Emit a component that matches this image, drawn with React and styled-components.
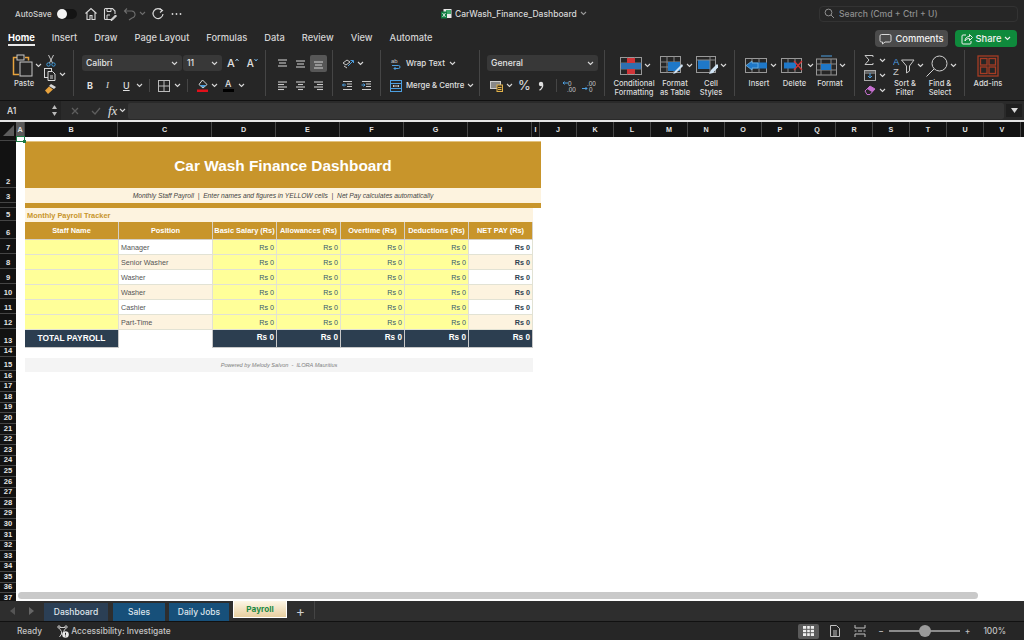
import React from "react";
import styled, { createGlobalStyle } from "styled-components";

const Global = createGlobalStyle`
  html, body { margin: 0; padding: 0; background: #252525; }
  * { box-sizing: border-box; }
`;

const UI = `"Inter", "Liberation Sans", sans-serif`;
const SHEET = `"Liberation Sans", Arial, sans-serif`;

const Window = styled.div`
  width: 1024px;
  height: 640px;
  overflow: hidden;
  display: flex;
  flex-direction: column;
  background: #262626;
  font-family: ${UI};
  color: #e4e4e4;
`;
const Gap = styled.span`
  width: ${(p) => p.$w}px;
  flex: none;
`;
const Glyph = styled.svg`
  flex: none;
  display: block;
`;

/* title bar */
const TitleBar = styled.div`
  height: 27px;
  flex: none;
  display: grid;
  grid-template-columns: 441px 378px 1fr;
  align-items: center;
`;
const QuickBar = styled.div`
  display: flex;
  align-items: center;
  padding-left: 15px;
`;
const AutoSave = styled.span`
  width: 35px;
  font-size: 8px;
  font-weight: 500;
  white-space: nowrap;
  color: #d0d0d0;
`;
const Toggle = styled.span`
  width: 20px;
  height: 10px;
  margin: 0 7px;
  border-radius: 5px;
  background: #141414;
  display: flex;
  &::before {
    content: "";
    width: 10px;
    height: 10px;
    border-radius: 50%;
    background: #f4f4f4;
  }
`;
const QuickIcon = styled.span`
  display: flex;
  margin-left: ${(p) => p.$ml || 0}px;
  opacity: ${(p) => (p.$dim ? 0.4 : 1)};
`;
const FileName = styled.div`
  display: flex;
  align-items: center;
  gap: 3px;
  font-size: 8.5px;
  font-weight: 500;
  color: #d8d8d8;
`;
const Search = styled.div`
  width: 199px;
  height: 16px;
  border: 1px solid #333;
  border-radius: 4px;
  display: flex;
  align-items: center;
  gap: 4px;
  padding-left: 4px;
  font-size: 8.6px;
  font-weight: 500;
  color: #8f8f8f;
`;

/* ribbon tabs */
const TabBar = styled.div`
  height: 23px;
  flex: none;
  display: flex;
  align-items: flex-start;
  padding: 4px 7px 0 8px;
  gap: 17px;
`;
const MenuTab = styled.div`
  height: 15px;
  font-size: 9.3px;
  line-height: 13px;
  white-space: nowrap;
  font-weight: ${(p) => (p.$active ? 700 : 500)};
  color: ${(p) => (p.$active ? "#fff" : "#d4d4d4")};
  border-bottom: ${(p) => (p.$active ? "2px solid #e8e8e8" : "none")};
`;
const TopActions = styled.div`
  margin: -1px 0 0 auto;
  display: flex;
  gap: 7px;
`;
const TopButton = styled.div`
  height: 17px;
  width: ${(p) => p.$w}px;
  border-radius: 4px;
  background: ${(p) => p.$bg};
  color: #f2f2f2;
  font-size: 9.3px;
  font-weight: 500;
  display: flex;
  align-items: center;
  justify-content: center;
  gap: 3px;
`;

/* ribbon */
const Ribbon = styled.div`
  height: 51px;
  flex: none;
  display: flex;
  border-bottom: 1px solid #111;
`;
const Group = styled.div`
  width: ${(p) => p.$w}px;
  height: 46px;
  padding: 5px 0 0 ${(p) => p.$pl || 0}px;
  border-right: ${(p) => (p.$last ? "none" : "1px solid #454545")};
  display: flex;
`;
const Stack = styled.div`
  display: flex;
  flex-direction: column;
  gap: ${(p) => p.$gap ?? 6.5}px;
  width: ${(p) => (p.$w ? `${p.$w}px` : "auto")};
  margin-top: ${(p) => p.$mt || 0}px;
`;
const Line = styled.div`
  height: ${(p) => p.$h || 16}px;
  display: flex;
  align-items: center;
  gap: ${(p) => p.$gap || 0}px;
  padding-left: ${(p) => p.$pl || 0}px;
`;
const Select = styled.div`
  width: ${(p) => p.$w}px;
  height: 16px;
  flex: none;
  border-radius: 3px;
  background: #383838;
  padding: 0 4px;
  display: flex;
  align-items: center;
  justify-content: space-between;
  font-size: 8.6px;
  font-weight: 500;
  color: #e4e4e4;
`;
const Big = styled.div`
  width: ${(p) => p.$w}px;
  flex: none;
  display: flex;
  flex-direction: column;
  align-items: center;
`;
const BigIcon = styled.div`
  height: 21px;
  flex: none;
  display: flex;
  align-items: center;
  gap: 2px;
  margin-left: ${(p) => p.$shift || 0}px;
`;
const BigLabel = styled.div`
  margin-top: 3px;
  font-size: 7.6px;
  line-height: 9px;
  font-weight: 500;
  text-align: center;
  white-space: pre;
  color: #dcdcdc;
`;
const ToolText = styled.span`
  font-size: ${(p) => p.$size || 8}px;
  line-height: ${(p) => p.$size || 8}px;
  font-weight: ${(p) => p.$weight || 500};
  font-style: ${(p) => (p.$italic ? "italic" : "normal")};
  font-family: ${(p) => (p.$serif ? `"Liberation Serif", serif` : UI)};
  text-decoration: ${(p) => (p.$under ? "underline" : "none")};
  white-space: nowrap;
  color: #e0e0e0;
`;
const Divider = styled.span`
  width: 1px;
  height: 13px;
  flex: none;
  background: #454545;
`;
const GrowWrap = styled.span`
  display: flex;
  align-items: flex-start;
`;
const ColorWrap = styled.span`
  width: 11px;
  display: flex;
  flex-direction: column;
  align-items: center;
  gap: 1px;
`;
const ColorBar = styled.span`
  width: 11px;
  height: 3px;
  background: #000;
`;
const ActiveAlign = styled.span`
  width: 17px;
  height: 17px;
  margin-left: -3px;
  border-radius: 2px;
  background: #575757;
  display: flex;
  align-items: center;
  justify-content: center;
`;

/* formula bar */
const FormulaBar = styled.div`
  height: 21px;
  flex: none;
  display: flex;
  align-items: center;
  background: #2a2a2a;
  padding-right: 2px;
  border-bottom: 2px solid #e4e4e4;
`;
const NameBox = styled.div`
  width: 61px;
  height: 19px;
  background: #232323;
  padding: 0 3px 0 7px;
  display: flex;
  align-items: center;
  justify-content: space-between;
  font-size: 8.6px;
  font-weight: 500;
`;
const FormulaTools = styled.div`
  width: 67px;
  flex: none;
  display: flex;
  align-items: center;
  padding-left: 10px;
`;
const FormulaInput = styled.div`
  flex: 1;
  height: 16px;
  border-radius: 2px;
  background: #363636;
`;
const ExpandButton = styled.div`
  width: 16px;
  height: 13px;
  margin-left: 2px;
  background: #1f1f1f;
  display: flex;
  align-items: center;
  justify-content: center;
`;

/* grid frame */
const SheetArea = styled.div`
  flex: 1;
  min-height: 0;
  position: relative;
  display: flex;
  flex-direction: column;
  overflow: hidden;
  background: #fff;
`;
const ColHeaders = styled.div`
  height: 15px;
  flex: none;
  display: flex;
  background: #121212;
`;
const Corner = styled.div`
  width: 16px;
  flex: none;
  position: relative;
  &::after {
    content: "";
    position: absolute;
    right: 2px;
    bottom: 1px;
    border-style: solid;
    border-width: 0 0 11px 11px;
    border-color: transparent transparent #5c5c5c transparent;
  }
`;
const ColHead = styled.div`
  width: ${(p) => p.$w}px;
  flex: none;
  border-right: 1px solid #454545;
  background: ${(p) => (p.$on ? "#5a5a5a" : "transparent")};
  font: bold 7.2px/15px ${SHEET};
  color: #e4e4e4;
  text-align: center;
`;
const Body = styled.div`
  flex: 1;
  min-height: 0;
  display: flex;
`;
const RowHeads = styled.div`
  width: 16px;
  flex: none;
  background: #121212;
  overflow: hidden;
`;
const RowHead = styled.div`
  height: ${(p) => p.$h}px;
  border-bottom: 1px solid #454545;
  overflow: hidden;
  display: flex;
  align-items: flex-end;
  justify-content: center;
  font: bold 7.6px/10px ${SHEET};
  color: #e4e4e4;
`;
const Canvas = styled.div`
  flex: 1;
  padding: 4px 0 0 9px;
  background: #fff;
  position: relative;
  font-family: ${SHEET};
`;
const Selection = styled.div`
  position: absolute;
  left: 0;
  top: -1px;
  width: 9px;
  height: 6px;
  border: 1px solid #1d7a45;
  &::after {
    content: "";
    position: absolute;
    right: -2px;
    bottom: -2px;
    width: 3px;
    height: 3px;
    background: #1d7a45;
  }
`;
const TitleBand = styled.div`
  width: 516px;
  height: 47px;
  padding-top: 1px;
  background: #c8952b;
  border-top: 1px solid #e3c27e;
  display: flex;
  align-items: center;
  justify-content: center;
  font-size: 15.4px;
  font-weight: 700;
  color: #fff;
`;
const SubBand = styled.div`
  width: 516px;
  height: 15px;
  background: #fdf3df;
  display: flex;
  align-items: center;
  justify-content: center;
  font-size: 6.7px;
  font-style: italic;
  color: #444;
  white-space: pre;
`;
const GoldRule = styled.div`
  width: 516px;
  height: 5px;
  background: #c8952b;
`;
const SectionBand = styled.div`
  width: 508px;
  height: 14px;
  padding-left: 2px;
  background: #fdf3df;
  display: flex;
  align-items: center;
  font-size: 7.4px;
  font-weight: 700;
  color: #c8952b;
`;
const Table = styled.div`
  width: 508px;
  display: grid;
  grid-template-columns: 94px 94px repeat(5, 64px);
  grid-template-rows: 18px repeat(6, 15px) 18px;
`;
const Head = styled.div`
  background: #c8952b;
  border: 1px solid #d4d0c8;
  border-width: 0 1px 1px 0;
  display: flex;
  align-items: center;
  justify-content: center;
  font-size: 7.4px;
  font-weight: 700;
  color: #fff;
  white-space: nowrap;
`;
const Cell = styled.div`
  background: ${(p) => p.$bg};
  border: 1px solid #e2e2d4;
  border-width: 0 1px 1px 0;
  padding: 0 2px;
  display: flex;
  align-items: center;
  justify-content: ${(p) => (p.$num ? "flex-end" : "flex-start")};
  font-size: 7.2px;
  font-weight: ${(p) => (p.$bold ? 700 : 400)};
  color: ${(p) => (p.$bold ? "#2c3e50" : p.$num ? "#35596f" : "#555")};
`;
const TotalLabel = styled.div`
  background: #2c3e50;
  display: flex;
  align-items: center;
  justify-content: center;
  padding-bottom: 2px;
  border-right: 1px solid #c8c8c8;
  border-bottom: 1px solid #c8c8c8;
  font-size: 8.4px;
  font-weight: 700;
  color: #fff;
`;
const TotalBlank = styled.div`
  background: #fff;
  border-right: 1px solid #c8c8c8;
`;
const TotalCell = styled.div`
  background: #2c3e50;
  display: flex;
  align-items: center;
  justify-content: flex-end;
  padding: 0 2px 2px 0;
  border-right: 1px solid #c8c8c8;
  border-bottom: 1px solid #c8c8c8;
  font-size: 8.2px;
  font-weight: 700;
  color: #fff;
`;
const Footer = styled.div`
  width: 508px;
  height: 14px;
  margin-top: 10px;
  background: #f4f4f4;
  display: flex;
  align-items: center;
  justify-content: center;
  font-size: 5.6px;
  font-style: italic;
  color: #808080;
  white-space: pre;
`;
const HScroll = styled.div`
  position: absolute;
  left: 18px;
  bottom: 2px;
  width: 960px;
  height: 7px;
  border-radius: 4px;
  background: #c9c9c9;
`;

/* sheet tabs + status */
const SheetTabs = styled.div`
  height: 20px;
  flex: none;
  background: #2e2e2e;
  display: flex;
  align-items: flex-start;
  padding-left: 44px;
  position: relative;
`;
const TabArrows = styled.div`
  position: absolute;
  left: 10px;
  top: 6px;
  display: flex;
  gap: 12px;
`;
const SheetTab = styled.div`
  width: ${(p) => p.$w}px;
  height: 18px;
  margin: 2px ${(p) => p.$mr || 4}px 0 0;
  display: flex;
  align-items: center;
  justify-content: center;
  font-size: 8.5px;
  font-weight: 500;
  color: #dfe6ec;
  background: ${(p) => p.$bg};
`;
const PayrollTab = styled.div`
  width: 54px;
  height: 17px;
  border: 1px solid #fff;
  border-top: none;
  background: linear-gradient(#fdf6e6, #e7cfa0);
  display: flex;
  align-items: center;
  justify-content: center;
  font-size: 8.2px;
  font-weight: 700;
  color: #1e8a44;
`;
const AddTab = styled.div`
  width: 28px;
  height: 18px;
  border-right: 1px solid #444;
  display: flex;
  align-items: center;
  justify-content: center;
  padding-top: 1px;
  font-size: 14px;
  color: #d0d0d0;
`;
const StatusBar = styled.div`
  height: 19px;
  flex: none;
  display: flex;
  align-items: center;
  background: #262626;
  border-top: 1px solid #111;
  padding-left: 17px;
  font-size: 8.4px;
  font-weight: 500;
  color: #c4c4c4;
`;
const StatusRight = styled.div`
  margin-left: auto;
  display: flex;
  align-items: center;
  padding-right: 18px;
`;
const ViewButton = styled.div`
  width: 21px;
  height: 15px;
  border-radius: 2px;
  background: ${(p) => (p.$on ? "#5a5a5a" : "transparent")};
  margin-right: ${(p) => p.$mr || 0}px;
  display: flex;
  align-items: center;
  justify-content: center;
`;
const Slider = styled.div`
  width: 71px;
  height: 2px;
  margin: 0 5px;
  background: #8a8a8a;
  position: relative;
`;
const Knob = styled.div`
  position: absolute;
  left: 30px;
  top: -5px;
  width: 12px;
  height: 12px;
  border-radius: 50%;
  background: #9a9a9a;
`;
const ZoomValue = styled.span`
  margin-left: 13px;
`;

/* icons */
const Chev = ({ c = "#d8d8d8" }) => (
  <Glyph width="7" height="5" viewBox="0 0 7 5">
    <path d="M1 1l2.5 2.5L6 1" fill="none" stroke={c} strokeWidth="1.1" />
  </Glyph>
);
const Svg = ({ w, h, children }) => (
  <Glyph width={w} height={h} viewBox={`0 0 ${w} ${h}`} fill="none" stroke="#d8d8d8" strokeWidth="1">
    {children}
  </Glyph>
);
const HomeIcon = () => (
  <Svg w={14} h={14}><path d="M1.5 6.5L7 1.5l5.5 5M3 5.5V12.5h3V8.5h2v4h3V5.5" strokeWidth="1.1" /></Svg>
);
const SaveIcon = () => (
  <Svg w={14} h={14}><path d="M9 12.5H2.5a1 1 0 0 1-1-1v-9a1 1 0 0 1 1-1h7l2.5 2.5v3" strokeWidth="1.1" /><path d="M4 1.5v3h4v-3M4 12v-4h3" /><path d="M8 12.5l4.5-4.5 1 1L9 13.5H8z" fill="#d8d8d8" /></Svg>
);
const UndoIcon = () => (
  <Svg w={14} h={14}><path d="M4 1.5L1.5 4 4 6.5M1.5 4h6.5a3.5 3.5 0 0 1 1 7l-3 2" strokeWidth="1.1" /></Svg>
);
const RedoIcon = () => (
  <Svg w={14} h={14}><path d="M11 3.5A5 5 0 1 0 12 7" strokeWidth="1.2" /><path d="M8.5 1.5L11.5 3.5 9 5.5" strokeWidth="1.1" /></Svg>
);
const Dots = () => (
  <Svg w={11} h={4}><circle cx="1.5" cy="2" r=".9" fill="#d8d8d8" stroke="none" /><circle cx="5.5" cy="2" r=".9" fill="#d8d8d8" stroke="none" /><circle cx="9.5" cy="2" r=".9" fill="#d8d8d8" stroke="none" /></Svg>
);
const ExcelDoc = () => (
  <Svg w={11} h={11}>
    <rect x="2.5" y="1" width="8" height="9" fill="#e8e8e8" stroke="none" />
    <rect x="5" y="2" width="5" height="4" fill="#3fa56b" stroke="none" />
    <rect x="0" y="3.5" width="6" height="7" fill="#107c41" stroke="none" />
    <path d="M1.5 5l3 4M4.5 5l-3 4" stroke="#fff" strokeWidth=".8" />
  </Svg>
);
const Magnifier = () => (
  <Svg w={11} h={11}>
    <circle cx="4.5" cy="4.5" r="3.4" stroke="#909090" />
    <path d="M7 7l3 3" stroke="#909090" />
  </Svg>
);
const CommentIcon = () => (
  <Svg w={13} h={12}><path d="M2.5 1.5h8a1.5 1.5 0 0 1 1.5 1.5v4.5A1.5 1.5 0 0 1 10.5 9H6l-2.5 2V9h-1A1.5 1.5 0 0 1 1 7.5V3a1.5 1.5 0 0 1 1.5-1.5z" /></Svg>
);
const ShareIcon = () => (
  <Svg w={12} h={12}><path d="M5 2H2a1 1 0 0 0-1 1v7a1 1 0 0 0 1 1h7a1 1 0 0 0 1-1V8" stroke="#eee" /><path d="M4 8c0-3 2-4.5 4.5-4.5V1.5l3 3-3 3V5.5C6.5 5.5 5 6 4 8z" stroke="#eee" /></Svg>
);
const PasteIcon = () => (
  <Svg w={21} h={23}>
    <path d="M7 3.5H1.5v17H7" stroke="#e8a33d" strokeWidth="1.5" />
    <path d="M13 3.5h3.5v3" stroke="#e8a33d" strokeWidth="1.5" />
    <rect x="5" y="1" width="7" height="5" fill="#262626" stroke="#c8c8c8" />
    <rect x="8" y="8" width="12" height="14" stroke="#c8c8c8" />
  </Svg>
);
const CutIcon = () => (
  <Svg w={10} h={13}><path d="M2.5 1l4 8M7.5 1l-4 8" stroke="#c8c8c8" /><circle cx="2.5" cy="10.5" r="1.7" stroke="#3f9bdc" /><circle cx="7.5" cy="10.5" r="1.7" stroke="#3f9bdc" /></Svg>
);
const CopyIcon = () => (
  <Svg w={12} h={13}><rect x=".5" y=".5" width="7" height="9" /><path d="M4 3.5h4.5L11 6v6.5H4z" fill="#262626" /><path d="M6 8h3M6 10h3" /></Svg>
);
const BrushIcon = () => (
  <Svg w={13} h={12}><path d="M7 1l5 3-2 2-5-3z" fill="#d8d8d8" stroke="none" /><path d="M5 3.5L1 7.5l3 3.5 5-4.5z" fill="#e8a33d" stroke="none" /></Svg>
);
const GrowFont = ({ up }) => (
  <GrowWrap>
    <ToolText $size={up ? 11 : 10}>A</ToolText>
    <Glyph width="4" height="4" viewBox="0 0 4 4" fill="none" stroke={up ? "#9cc4e4" : "#6fb2e6"}>
      <path d={up ? "M.5 3L2 1l1.5 2" : "M.5 1L2 3l1.5-2"} />
    </Glyph>
  </GrowWrap>
);
const Borders = () => (
  <Svg w={12} h={12}><rect x=".5" y=".5" width="11" height="11" stroke="#bbb" /><path d="M6 .5v11M.5 6h11" stroke="#bbb" /></Svg>
);
const FillIcon = () => (
  <Svg w={12} h={13}>
    <path d="M5.5 1L10 5.5 6 9 2 5.5z" />
    <path d="M2.5 6h7L6 8.6z" fill="#4d9fe0" stroke="none" />
    <rect x="0" y="10.5" width="11" height="2.5" fill="#e0101a" stroke="none" />
  </Svg>
);
const ColorA = () => (
  <ColorWrap>
    <ToolText $size={9}>A</ToolText>
    <ColorBar />
  </ColorWrap>
);
const Lines = ({ rows }) => (
  <Svg w={11} h={11}>
    {rows.map(([x1, x2, y], i) => (
      <path key={i} d={`M${x1} ${y}H${x2}`} stroke="#c8c8c8" strokeWidth="1.1" />
    ))}
  </Svg>
);
const Orientation = () => (
  <Svg w={12} h={11}><path d="M1 5l4-3 3 2-4 3zM2 8l3 2" stroke="#c8c8c8" /><path d="M6 8l5-5M8.5 2.5H11.5V5" stroke="#4d9fe0" /></Svg>
);
const Indent = ({ flip }) => (
  <Svg w={11} h={11}>
    <path d="M1 1.5h9M5 4h5M5 6.5h5M1 9.5h9" stroke="#c8c8c8" />
    <path d={flip ? "M.5 5H4M2.5 3.5L4 5 2.5 6.5" : "M4 5H.5M2 3.5L.5 5 2 6.5"} stroke="#4d9fe0" />
  </Svg>
);
const WrapIcon = () => (
  <Svg w={11} h={13}>
    <text x="1" y="6" fontSize="6" fill="#c8c8c8" stroke="none" fontFamily={SHEET}>ab</text>
    <path d="M2 8.5h6.5a1.5 1.5 0 0 1 0 3H4M5.5 10L4 11.5 5.5 13" stroke="#4d9fe0" />
  </Svg>
);
const MergeIcon = () => (
  <Svg w={12} h={12}><rect x=".5" y=".5" width="11" height="11" stroke="#4d9fe0" /><path d="M.5 3.5h11M.5 8.5h11" stroke="#4d9fe0" /><path d="M3 6h6M4 5l-1 1 1 1M8 5l1 1-1 1" stroke="#c8c8c8" /></Svg>
);
const MoneyIcon = () => (
  <Svg w={13} h={12}><rect x=".5" y="1.5" width="10" height="7" fill="#888" stroke="#ccc" /><rect x="7" y="5" width="5.5" height="6.5" fill="#3a3120" stroke="#e2b24a" /><path d="M8 7.5h3.5M8 9.5h3.5" stroke="#e2b24a" /></Svg>
);
const CommaIcon = () => (
  <Svg w={6} h={10}>
    <circle cx="3" cy="3" r="2.2" fill="#e0e0e0" stroke="none" />
    <path d="M4.7 3.5C4.800 6 3.500 8 1.500 9.300" stroke="#e0e0e0" strokeWidth="1.3" />
  </Svg>
);
const DecimalIcon = ({ rev }) => (
  <Svg w={14} h={12}>
    <text x="5" y="5.5" fontSize="6.4" fill="#c8c8c8" stroke="none" fontFamily={SHEET}>{rev ? ".00" : "0"}</text>
    <text x={rev ? 7 : 4} y="11.5" fontSize="6.4" fill="#c8c8c8" stroke="none" fontFamily={SHEET}>{rev ? "0" : ".00"}</text>
    <path d={rev ? "M0 8.5h5M3.5 7L5 8.5 3.5 10" : "M0 3h5M1.5 1.5L0 3l1.5 1.5"} stroke="#4d9fe0" />
  </Svg>
);
const CondIcon = () => (
  <Svg w={22} h={18}>
    <rect x=".5" y=".5" width="21" height="17" stroke="#999" />
    <path d="M7.5 .5v17M14.5 .5v17M.5 6h21M.5 12h21" stroke="#777" />
    <rect x="7" y="1" width="8" height="5" fill="#d13438" stroke="none" />
    <rect x="1" y="6" width="20" height="6" fill="#2f6fb0" stroke="none" />
    <rect x="7" y="12" width="8" height="5" fill="#d13438" stroke="none" />
  </Svg>
);
const TableIcon = () => (
  <Svg w={24} h={19}>
    <rect x=".5" y=".5" width="20" height="16" stroke="#999" />
    <path d="M7 .5v16M14 .5v16M.5 6h20M.5 11h20" stroke="#888" />
    <rect x="8" y="6" width="12" height="9" fill="#1f78c8" stroke="none" />
    <path d="M22 8l-7 7-2 3 3-1 7-7z" fill="#cfe3f4" stroke="none" />
  </Svg>
);
const CellStylesIcon = () => (
  <Svg w={22} h={19}>
    <rect x=".5" y=".5" width="19" height="16" stroke="#999" />
    <rect x="2" y="4" width="12" height="9" fill="#1f78c8" stroke="none" />
    <path d="M.5 4h19M14 .5v16" stroke="#888" />
    <path d="M21 8l-6 6-2 4 4-1 6-7z" fill="#cfe3f4" stroke="none" />
  </Svg>
);
const InsertIcon = () => (
  <Svg w={23} h={17}>
    <rect x=".5" y="1.5" width="21" height="14" stroke="#999" />
    <path d="M7 1.5v14M14 1.5v14" stroke="#888" />
    <rect x="5" y="5.5" width="17" height="6" fill="#1f78c8" stroke="none" />
    <path d="M7 4L1 8.5 7 13V11h6V6H7z" fill="#1f78c8" stroke="#7fbde8" strokeWidth=".7" />
  </Svg>
);
const DeleteIcon = () => (
  <Svg w={24} h={17}>
    <rect x=".5" y="1.5" width="20" height="14" stroke="#999" />
    <path d="M7 1.5v14M14 1.5v14" stroke="#888" />
    <rect x="3" y="5.5" width="12" height="6" fill="#1f78c8" stroke="none" />
    <path d="M13 4l8 9M21 4l-8 9" stroke="#d13438" strokeWidth="1.3" />
  </Svg>
);
const FormatIcon = () => (
  <Svg w={21} h={21}>
    <path d="M5 1h11" stroke="#4d9fe0" />
    <rect x=".5" y="4" width="20" height="16" stroke="#999" />
    <path d="M5 4v16M15 4v16M.5 9h20M.5 15h20" stroke="#888" />
    <rect x="5" y="9" width="10" height="6" fill="#1f78c8" stroke="none" />
  </Svg>
);
const SigmaIcon = () => (
  <Svg w={10} h={10}><path d="M9 2V.5H1L5 5 1 9.5h8V8" stroke="#c8c8c8" /></Svg>
);
const FillDownIcon = () => (
  <Svg w={12} h={11}><rect x=".5" y=".5" width="11" height="10" stroke="#aaa" /><rect x="1" y="1" width="10" height="3" fill="#666" stroke="none" /><path d="M6 3v5M4 6l2 2 2-2" stroke="#4d9fe0" /></Svg>
);
const EraserIcon = () => (
  <Svg w={12} h={10}><path d="M1 6l5-5 5 3-5 5.5H3z" stroke="#c66fd0" /><path d="M6 1l5 3-3 3-5-3z" fill="#c66fd0" stroke="none" /></Svg>
);
const SortIcon = () => (
  <Svg w={22} h={20}>
    <text x="0" y="9" fontSize="9.5" fill="#4d9fe0" stroke="none" fontFamily={SHEET}>A</text>
    <text x="0" y="19" fontSize="9.5" fill="#c8c8c8" stroke="none" fontFamily={SHEET}>Z</text>
    <path d="M8.5 4H21l-4.500 6v5l-3 2v-7z" stroke="#c8c8c8" />
  </Svg>
);
const FindIcon = () => (
  <Svg w={22} h={22}>
    <circle cx="13.5" cy="8.5" r="7.5" stroke="#d0d0d0" />
    <path d="M8 14l-7.5 7.5" stroke="#d0d0d0" />
  </Svg>
);
const AddInsIcon = () => (
  <Glyph width="22" height="22" viewBox="0 0 22 22" fill="none" stroke="#a63c24" strokeWidth="1.3">
    <rect x="1" y="1" width="20" height="20" />
    <rect x="3.5" y="3.5" width="6.5" height="6.5" />
    <rect x="12" y="3.5" width="6.5" height="6.5" />
    <rect x="3.5" y="12" width="6.5" height="6.5" />
    <rect x="12" y="12" width="6.5" height="6.5" />
  </Glyph>
);
const Spinner = () => (
  <Glyph width="7" height="13" viewBox="0 0 7 13">
    <path d="M3.5 1L6 5H1z" fill="#bbb" />
    <path d="M3.5 12L6 8H1z" fill="#bbb" />
  </Glyph>
);
const CrossIcon = () => (
  <Svg w={8} h={8}><path d="M1 1l6 6M7 1l-6 6" stroke="#5e5e5e" strokeWidth="1.3" /></Svg>
);
const TickIcon = () => (
  <Svg w={10} h={8}><path d="M1 4l3 3 5-6" stroke="#5e5e5e" strokeWidth="1.3" /></Svg>
);
const A11yIcon = () => (
  <Svg w={13} h={13}>
    <circle cx="3" cy="2" r="1.2" stroke="#ccc" />
    <circle cx="10" cy="2" r="1.2" stroke="#ccc" />
    <path d="M4 2.5h5M3.5 3.5l2 3v3M9.5 3.5l-2 3M3.5 12l2-3" stroke="#ccc" />
    <circle cx="9.5" cy="9.5" r="3.3" fill="#e8e8e8" stroke="none" />
    <path d="M9.5 7.8v2M9.5 10.6v.8" stroke="#222" />
  </Svg>
);
const GridView = () => (
  <Svg w={11} h={10}>
    <rect width="11" height="10" fill="#f0f0f0" stroke="none" />
    <path d="M3.7 0v10M7.3 0v10M0 3.3h11M0 6.7h11" stroke="#5a5a5a" />
  </Svg>
);
const PageView = () => (
  <Svg w={10} h={12}><path d="M.5.5h6l3 3v8h-9z" stroke="#c0c0c0" /><path d="M3 6h4M3 8h4M3 10h4" stroke="#c0c0c0" /></Svg>
);
const BreakView = () => (
  <Svg w={12} h={12}><path d="M1 0v3h10V0M1 12V9h10v3" stroke="#c0c0c0" /><path d="M.5 6h2M4 6h4M9.5 6h2" stroke="#c0c0c0" /></Svg>
);
const Triangle = ({ left, c = "#666" }) => (
  <Glyph width="6" height="8" viewBox="0 0 6 8">
    <path d={left ? "M5 0v8L0 4z" : "M1 0v8l5-4z"} fill={c} />
  </Glyph>
);

/* data */
const columns = [
  ["A", 9, true], ["B", 93], ["C", 94], ["D", 64], ["E", 64], ["F", 64], ["G", 64], ["H", 64], ["I", 8],
  ...["J", "K", "L", "M", "N", "O", "P", "Q", "R", "S", "T", "U", "V", ""].map((c) => [c, 37]),
];
const rowHeights = [4, 47, 15, 5, 13, 18, 15, 15, 15, 15, 15, 15, 18, 10, 14, ...Array(22).fill(10.6)];
const headers = ["Staff Name", "Position", "Basic Salary (Rs)", "Allowances (Rs)", "Overtime (Rs)", "Deductions (Rs)", "NET PAY (Rs)"];
const positions = ["Manager", "Senior Washer", "Washer", "Washer", "Cashier", "Part-Time"];
const menu = ["Insert", "Draw", "Page Layout", "Formulas", "Data", "Review", "View", "Automate"];

const YELLOW = "#ffff99";
const CREAM = "#fdf3df";

export default function App() {
  return (
    <Window>
      <Global />
      <TitleBar>
        <QuickBar>
          <AutoSave>AutoSave</AutoSave>
          <Toggle />
          <QuickIcon><HomeIcon /></QuickIcon>
          <QuickIcon $ml={5}><SaveIcon /></QuickIcon>
          <QuickIcon $ml={6} $dim><UndoIcon /></QuickIcon>
          <QuickIcon $ml={2} $dim><Chev /></QuickIcon>
          <QuickIcon $ml={5}><RedoIcon /></QuickIcon>
          <QuickIcon $ml={6}><Dots /></QuickIcon>
        </QuickBar>
        <FileName>
          <ExcelDoc />
          CarWash_Finance_Dashboard
          <Chev c="#999" />
        </FileName>
        <Search>
          <Magnifier />
          Search (Cmd + Ctrl + U)
        </Search>
      </TitleBar>

      <TabBar>
        <MenuTab $active>Home</MenuTab>
        {menu.map((m) => (
          <MenuTab key={m}>{m}</MenuTab>
        ))}
        <TopActions>
          <TopButton $w={73} $bg="#4b4b4b"><CommentIcon />Comments</TopButton>
          <TopButton $w={62} $bg="#0f8a3c"><ShareIcon />Share<Chev c="#eee" /></TopButton>
        </TopActions>
      </TabBar>

      <Ribbon>
        <Group $w={74} $pl={11}>
          <Big $w={26}>
            <BigIcon $shift={6}><PasteIcon /><Chev /></BigIcon>
            <BigLabel>Paste</BigLabel>
          </Big>
          <Gap $w={7} />
          <Stack $gap={2.5} $mt={-1}>
            <Line $h={12} $pl={2}><CutIcon /></Line>
            <Line $h={12} $gap={3}><CopyIcon /><Chev /></Line>
            <Line $h={12}><BrushIcon /></Line>
          </Stack>
        </Group>

        <Group $w={192} $pl={8}>
          <Stack>
            <Line>
              <Select $w={100}>Calibri<Chev /></Select>
              <Gap $w={1} />
              <Select $w={39}>11<Chev /></Select>
              <Gap $w={5} />
              <GrowFont up />
              <Gap $w={8} />
              <GrowFont />
            </Line>
            <Line $pl={5}>
              <ToolText $size={9} $weight={700}>B</ToolText>
              <Gap $w={13} />
              <ToolText $size={9} $italic $serif>I</ToolText>
              <Gap $w={14} />
              <ToolText $size={9} $under>U</ToolText>
              <Gap $w={6} />
              <Chev />
              <Gap $w={6} />
              <Divider />
              <Gap $w={8} />
              <Borders />
              <Gap $w={4} />
              <Chev />
              <Gap $w={6} />
              <Divider />
              <Gap $w={9} />
              <FillIcon />
              <Gap $w={2} />
              <Chev />
              <Gap $w={5} />
              <ColorA />
              <Gap $w={4} />
              <Chev />
            </Line>
          </Stack>
        </Group>

        <Group $w={67} $pl={11}>
          <Stack>
            <Line $gap={7}>
              <Lines rows={[[1, 10, 2], [2, 9, 5], [1, 10, 8]]} />
              <Lines rows={[[1, 10, 3], [2, 9, 6], [1, 10, 9]]} />
              <ActiveAlign><Lines rows={[[1, 10, 4], [2, 9, 7], [1, 10, 10]]} /></ActiveAlign>
            </Line>
            <Line $gap={7}>
              <Lines rows={[[1, 10, 2], [1, 7, 4.5], [1, 10, 7], [1, 7, 9.5]]} />
              <Lines rows={[[1, 10, 2], [3, 8, 4.5], [1, 10, 7], [3, 8, 9.5]]} />
              <Lines rows={[[1, 10, 2], [4, 10, 4.5], [1, 10, 7], [4, 10, 9.5]]} />
            </Line>
          </Stack>
        </Group>

        <Group $w={48} $pl={9}>
          <Stack>
            <Line $gap={3}><Orientation /><Chev /></Line>
            <Line $gap={8}><Indent /><Indent flip /></Line>
          </Stack>
        </Group>

        <Group $w={99} $pl={9}>
          <Stack>
            <Line>
              <WrapIcon />
              <Gap $w={5} />
              <ToolText>Wrap Text</ToolText>
              <Gap $w={4} />
              <Chev />
            </Line>
            <Line>
              <MergeIcon />
              <Gap $w={4} />
              <ToolText $size={7.8}>Merge &amp; Centre</ToolText>
              <Gap $w={3} />
              <Chev />
            </Line>
          </Stack>
        </Group>

        <Group $w={125} $pl={7}>
          <Stack>
            <Select $w={111}>General<Chev /></Select>
            <Line $pl={3}>
              <MoneyIcon />
              <Gap $w={3} />
              <Chev />
              <Gap $w={5} />
              <ToolText $size={13} $weight={400}>%</ToolText>
              <Gap $w={7} />
              <CommaIcon />
              <Gap $w={12} />
              <Divider />
              <Gap $w={6} />
              <DecimalIcon />
              <Gap $w={5} />
              <DecimalIcon rev />
            </Line>
          </Stack>
        </Group>

        <Group $w={130} $pl={6}>
          <Big $w={46}><BigIcon $shift={2}><CondIcon /><Chev /></BigIcon><BigLabel>{"Conditional\nFormatting"}</BigLabel></Big>
          <Big $w={36}><BigIcon $shift={3}><TableIcon /><Chev /></BigIcon><BigLabel>{"Format\nas Table"}</BigLabel></Big>
          <Big $w={36}><BigIcon $shift={1}><CellStylesIcon /><Chev /></BigIcon><BigLabel>{"Cell\nStyles"}</BigLabel></Big>
        </Group>

        <Group $w={120} $pl={6}>
          <Big $w={36}><BigIcon $shift={4}><InsertIcon /><Chev /></BigIcon><BigLabel>Insert</BigLabel></Big>
          <Big $w={35}><BigIcon $shift={6}><DeleteIcon /><Chev /></BigIcon><BigLabel>Delete</BigLabel></Big>
          <Big $w={36}><BigIcon $shift={2}><FormatIcon /><Chev /></BigIcon><BigLabel>Format</BigLabel></Big>
        </Group>

        <Group $w={110} $pl={9}>
          <Stack $gap={3} $w={24} $mt={-1}>
            <Line $h={12} $gap={5}><SigmaIcon /><Chev /></Line>
            <Line $h={12} $gap={3}><FillDownIcon /><Chev /></Line>
            <Line $h={12} $gap={3}><EraserIcon /><Chev /></Line>
          </Stack>
          <Big $w={34}><BigIcon $shift={6}><SortIcon /><Chev /></BigIcon><BigLabel>{"Sort &\nFilter"}</BigLabel></Big>
          <Big $w={36}><BigIcon $shift={3}><FindIcon /><Chev /></BigIcon><BigLabel>{"Find &\nSelect"}</BigLabel></Big>
        </Group>

        <Group $w={59} $pl={8} $last>
          <Big $w={30}><BigIcon><AddInsIcon /></BigIcon><BigLabel>Add-ins</BigLabel></Big>
        </Group>
      </Ribbon>

      <FormulaBar>
        <NameBox>A1<Spinner /></NameBox>
        <FormulaTools>
          <CrossIcon />
          <Gap $w={12} />
          <TickIcon />
          <Gap $w={7} />
          <ToolText $size={13} $italic $serif $weight={400}>fx</ToolText>
          <Gap $w={2} />
          <Chev />
        </FormulaTools>
        <FormulaInput />
        <ExpandButton>
          <Glyph width="7" height="5" viewBox="0 0 7 5"><path d="M0 0h7L3.5 5z" fill="#d8d8d8" /></Glyph>
        </ExpandButton>
      </FormulaBar>

      <SheetArea>
        <ColHeaders>
          <Corner />
          {columns.map(([c, w, on], i) => (
            <ColHead key={i} $w={w} $on={on}>{c}</ColHead>
          ))}
        </ColHeaders>
        <Body>
          <RowHeads>
            {rowHeights.map((h, i) => (
              <RowHead key={i} $h={h}>{h > 5 ? i + 1 : ""}</RowHead>
            ))}
          </RowHeads>
          <Canvas>
            <Selection />
            <TitleBand>Car Wash Finance Dashboard</TitleBand>
            <SubBand>Monthly Staff Payroll  |  Enter names and figures in YELLOW cells  |  Net Pay calculates automatically</SubBand>
            <GoldRule />
            <SectionBand>Monthly Payroll Tracker</SectionBand>
            <Table>
              {headers.map((h) => (
                <Head key={h}>{h}</Head>
              ))}
              {positions.map((p, i) => {
                const band = i % 2 === 0 ? "#ffffff" : CREAM;
                return (
                  <React.Fragment key={i}>
                    <Cell $bg={YELLOW} />
                    <Cell $bg={band}>{p}</Cell>
                    {[0, 1, 2, 3].map((n) => (
                      <Cell key={n} $bg={YELLOW} $num>Rs 0</Cell>
                    ))}
                    <Cell $bg={band} $num $bold>Rs 0</Cell>
                  </React.Fragment>
                );
              })}
              <TotalLabel>TOTAL PAYROLL</TotalLabel>
              <TotalBlank />
              {[0, 1, 2, 3, 4].map((n) => (
                <TotalCell key={n}>Rs 0</TotalCell>
              ))}
            </Table>
            <Footer>Powered by Melody Salvon  -  ILORA Mauritius</Footer>
          </Canvas>
        </Body>
        <HScroll />
      </SheetArea>

      <SheetTabs>
        <TabArrows>
          <Triangle left c="#555" />
          <Triangle c="#666" />
        </TabArrows>
        <SheetTab $w={64} $mr={5} $bg="#2b3f55">Dashboard</SheetTab>
        <SheetTab $w={52} $bg="#17507a">Sales</SheetTab>
        <SheetTab $w={60} $bg="#17507a">Daily Jobs</SheetTab>
        <PayrollTab>Payroll</PayrollTab>
        <AddTab>+</AddTab>
      </SheetTabs>

      <StatusBar>
        Ready
        <Gap $w={14} />
        <A11yIcon />
        <Gap $w={2} />
        Accessibility: Investigate
        <StatusRight>
          <ViewButton $on $mr={5}><GridView /></ViewButton>
          <ViewButton $mr={4}><PageView /></ViewButton>
          <ViewButton $mr={8}><BreakView /></ViewButton>
          <span>−</span>
          <Slider><Knob /></Slider>
          <span>+</span>
          <ZoomValue>100%</ZoomValue>
        </StatusRight>
      </StatusBar>
    </Window>
  );
}
